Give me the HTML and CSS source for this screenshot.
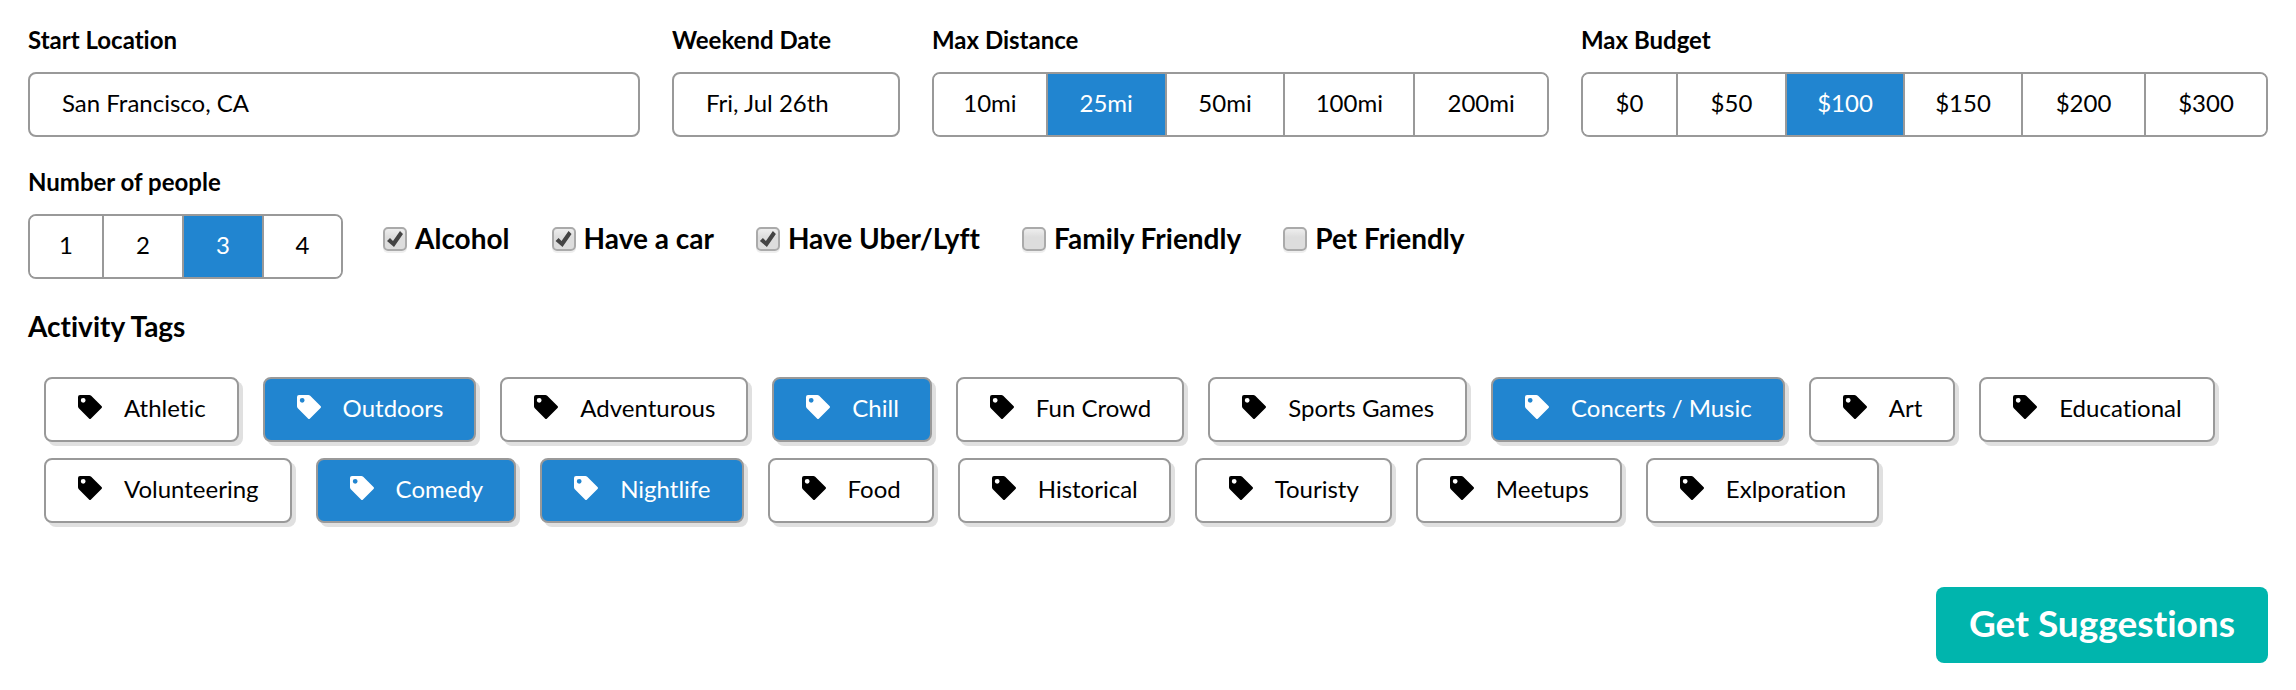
FILE: index.html
```
<!DOCTYPE html>
<html lang="en">
<head>
<meta charset="utf-8">
<meta name="viewport" content="width=device-width, initial-scale=1">
<title>Weekend Planner</title>
<link rel="stylesheet" href="styles.css">
</head>
<body>
<svg width="0" height="0" class="sprite" aria-hidden="true">
  <symbol id="tag" viewBox="0 0 24 24">
    <path fill-rule="evenodd" d="M2 0H11.300Q12.400 0 13.200 .8L23.500 11Q24.500 12 23.500 13L13 23.500Q12 24.500 11 23.500L.8 13.200Q0 12.400 0 11.300V2Q0 0 2 0ZM5.200 2.900A2.400 2.400 0 1 0 5.200 7.700A2.400 2.400 0 1 0 5.200 2.900Z"/>
  </symbol>
</svg>
<form class="planner">
  <div class="filters">
    <div class="field">
      <label class="label" for="location">Start Location</label>
      <input class="box" id="location" type="text" value="San Francisco, CA">
    </div>
    <div class="field">
      <label class="label" for="date">Weekend Date</label>
      <input class="box" id="date" type="text" value="Fri, Jul 26th">
    </div>
    <div class="field">
      <span class="label" id="distance">Max Distance</span>
      <div class="segments distance" role="group" aria-labelledby="distance">
        <button type="button">10mi</button>
        <button type="button" aria-pressed="true">25mi</button>
        <button type="button">50mi</button>
        <button type="button">100mi</button>
        <button type="button">200mi</button>
      </div>
    </div>
    <div class="field">
      <span class="label" id="budget">Max Budget</span>
      <div class="segments budget" role="group" aria-labelledby="budget">
        <button type="button">$0</button>
        <button type="button">$50</button>
        <button type="button" aria-pressed="true">$100</button>
        <button type="button">$150</button>
        <button type="button">$200</button>
        <button type="button">$300</button>
      </div>
    </div>
  </div>

  <div class="extras">
    <div class="field party">
      <span class="label" id="people">Number of people</span>
      <div class="segments people" role="group" aria-labelledby="people">
        <button type="button">1</button>
        <button type="button">2</button>
        <button type="button" aria-pressed="true">3</button>
        <button type="button">4</button>
      </div>
    </div>
    <div class="options">
      <label class="option"><input type="checkbox" checked>Alcohol</label>
      <label class="option"><input type="checkbox" checked>Have a car</label>
      <label class="option"><input type="checkbox" checked>Have Uber/Lyft</label>
      <label class="option"><input type="checkbox">Family Friendly</label>
      <label class="option"><input type="checkbox">Pet Friendly</label>
    </div>
  </div>

  <h2 class="heading">Activity Tags</h2>
  <div class="tags">
    <button type="button" class="tag"><svg class="icon"><use href="#tag"/></svg>Athletic</button>
    <button type="button" class="tag" aria-pressed="true"><svg class="icon"><use href="#tag"/></svg>Outdoors</button>
    <button type="button" class="tag"><svg class="icon"><use href="#tag"/></svg>Adventurous</button>
    <button type="button" class="tag" aria-pressed="true"><svg class="icon"><use href="#tag"/></svg>Chill</button>
    <button type="button" class="tag"><svg class="icon"><use href="#tag"/></svg>Fun Crowd</button>
    <button type="button" class="tag"><svg class="icon"><use href="#tag"/></svg>Sports Games</button>
    <button type="button" class="tag" aria-pressed="true"><svg class="icon"><use href="#tag"/></svg>Concerts / Music</button>
    <button type="button" class="tag"><svg class="icon"><use href="#tag"/></svg>Art</button>
    <button type="button" class="tag"><svg class="icon"><use href="#tag"/></svg>Educational</button>
    <button type="button" class="tag"><svg class="icon"><use href="#tag"/></svg>Volunteering</button>
    <button type="button" class="tag" aria-pressed="true"><svg class="icon"><use href="#tag"/></svg>Comedy</button>
    <button type="button" class="tag" aria-pressed="true"><svg class="icon"><use href="#tag"/></svg>Nightlife</button>
    <button type="button" class="tag"><svg class="icon"><use href="#tag"/></svg>Food</button>
    <button type="button" class="tag"><svg class="icon"><use href="#tag"/></svg>Historical</button>
    <button type="button" class="tag"><svg class="icon"><use href="#tag"/></svg>Touristy</button>
    <button type="button" class="tag"><svg class="icon"><use href="#tag"/></svg>Meetups</button>
    <button type="button" class="tag"><svg class="icon"><use href="#tag"/></svg>Exlporation</button>
  </div>

  <div class="actions">
    <button type="submit" class="submit">Get Suggestions</button>
  </div>
</form>
</body>
</html>
```
FILE: styles.css
```
:root {
  --blue: #2185d0;
  --teal: #00b5ad;
  --line: #999;
}

* {
  box-sizing: border-box;
}

body {
  margin: 0;
  background: #fff;
  color: #000;
  font: 24px/28px Lato, sans-serif;
  font-variant-ligatures: none;
}

button,
input {
  margin: 0;
  font: inherit;
  font-variant-ligatures: none;
  color: inherit;
}

button {
  cursor: pointer;
}

.sprite {
  position: absolute;
}

.planner {
  padding: 26px 28px 27px;
}

.filters {
  display: grid;
  grid-template-columns: 612fr 228fr 617fr 687fr;
  gap: 32px;
}

.field {
  display: flex;
  flex-direction: column;
  gap: 18px;
  min-width: 0;
}

.label {
  font-weight: 700;
}

.box {
  width: 100%;
  height: 65px;
  padding: 14px 32px 19px;
  border: 2px solid var(--line);
  border-radius: 8px;
  background: #fff;
}

.segments {
  display: grid;
  overflow: hidden;
  border: 2px solid var(--line);
  border-radius: 8px;
}

.distance {
  grid-template-columns: 112fr 119fr 119fr 130fr 134fr;
}

.budget {
  grid-template-columns: 93fr 109fr 118fr 118fr 123fr 122fr;
}

.people {
  grid-template-columns: 72fr 80fr 80fr 79fr;
}

.segments button {
  padding: 15px 0 18px;
  border: 0;
  border-left: 2px solid var(--line);
  background: #fff;
}

.segments button:first-child {
  border-left: 0;
}

.segments button[aria-pressed="true"],
.tag[aria-pressed="true"] {
  background: var(--blue);
  color: #fff;
}

.extras {
  display: flex;
  align-items: flex-end;
  gap: 40px;
  margin-top: 31px;
}

.party {
  flex: 0 0 315px;
}

.options {
  display: flex;
  flex-wrap: wrap;
  gap: 16px 42px;
  margin-bottom: 24px;
}

.option {
  display: flex;
  align-items: flex-end;
  gap: 8px;
  font-size: 28px;
  font-weight: 700;
  line-height: 34px;
}

.option input {
  appearance: none;
  width: 24px;
  height: 24px;
  margin-bottom: 4px;
  border: 2px solid #aaa;
  border-radius: 5px;
  background: linear-gradient(#eee, #ddd 40%);
  box-shadow: 0 2px 0 #eee;
}

.option input:checked::before {
  content: "";
  display: block;
  width: 20px;
  height: 20px;
  background: #444;
  clip-path: polygon(2px 12px, 5px 9px, 8px 12px, 15px 2px, 18px 5px, 9px 18px);
}

.heading {
  margin: 30px 0 34px;
  font-size: 28px;
  line-height: 34px;
}

.tags {
  display: flex;
  flex-wrap: wrap;
  gap: 16px 24px;
  padding: 0 16px;
}

.tag {
  display: flex;
  gap: 22px;
  padding: 15px 31px 18px 32px;
  border: 2px solid var(--line);
  border-radius: 8px;
  background: #fff;
  box-shadow: 4px 4px 0 #e0e0e0;
}

.icon {
  width: 24px;
  height: 24px;
  margin-top: 1px;
  fill: currentColor;
}

.actions {
  display: flex;
  justify-content: flex-end;
  margin-top: 64px;
}

.submit {
  padding: 14px 33px 18px;
  border: 0;
  border-radius: 8px;
  background: var(--teal);
  color: #fff;
  font-size: 37px;
  font-weight: 700;
  line-height: 44px;
}
```
